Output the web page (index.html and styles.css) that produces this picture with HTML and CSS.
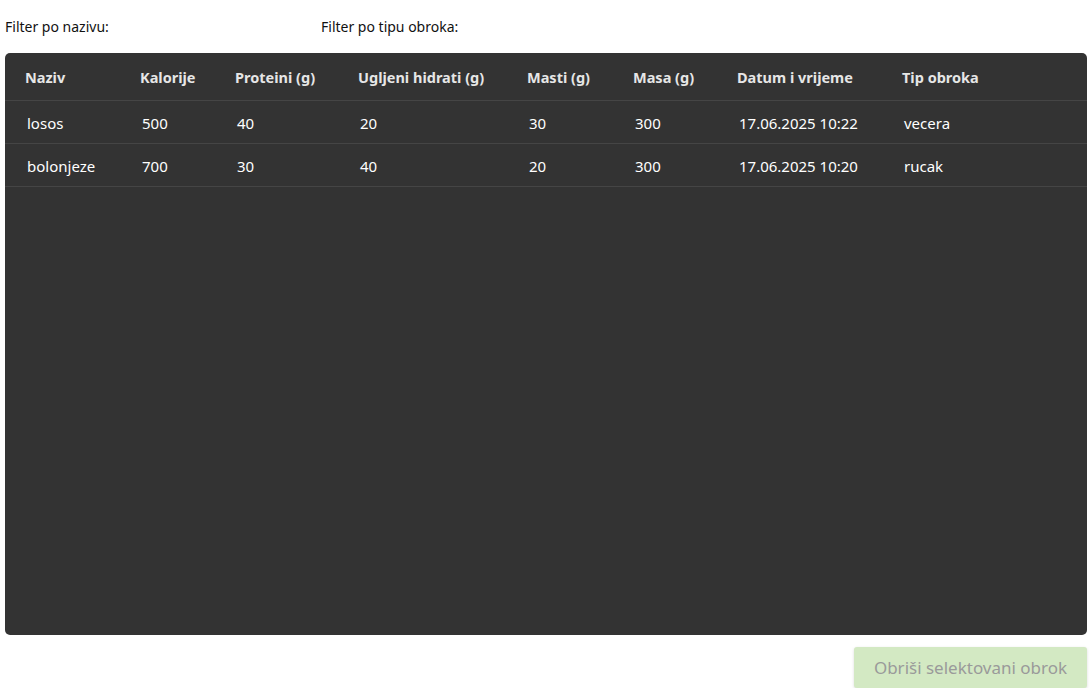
FILE: index.html
```html
<!DOCTYPE html>
<html>
<head>
<meta charset="utf-8">
<link rel="stylesheet" href="styles.css">
</head>
<body>
<div class="page">
  <div class="filters">
    <label class="filter filter-name">Filter po nazivu:</label>
    <label class="filter filter-type">Filter po tipu obroka:</label>
  </div>
  <div class="table-box">
    <table class="meals">
      <colgroup>
        <col style="width:115px"><col style="width:95px"><col style="width:123px"><col style="width:169px"><col style="width:106px"><col style="width:104px"><col style="width:165px"><col>
      </colgroup>
      <thead>
        <tr><th>Naziv</th><th>Kalorije</th><th>Proteini (g)</th><th>Ugljeni hidrati (g)</th><th>Masti (g)</th><th>Masa (g)</th><th>Datum i vrijeme</th><th>Tip obroka</th></tr>
      </thead>
      <tbody>
        <tr><td>losos</td><td>500</td><td>40</td><td>20</td><td>30</td><td>300</td><td>17.06.2025 10:22</td><td>vecera</td></tr>
        <tr><td>bolonjeze</td><td>700</td><td>30</td><td>40</td><td>20</td><td>300</td><td>17.06.2025 10:20</td><td>rucak</td></tr>
      </tbody>
    </table>
  </div>
  <div class="actions">
    <button class="delete-btn" disabled>Obriši selektovani obrok</button>
  </div>
</div>
</body>
</html>
```

FILE: styles.css
```css
html, body {
  margin: 0;
  padding: 0;
  background: #ffffff;
}
body {
  font-family: "Noto Sans", "Open Sans", sans-serif;
}
.page {
  padding: 0 5px;
}
.filters {
  display: flex;
  height: 53px;
  align-items: center;
  font-size: 14px;
  color: #111;
}
.filter-name {
  width: 316px;
}
.table-box {
  height: 582px;
  background: #333333;
  border-radius: 5px;
  overflow: hidden;
}
.meals {
  width: 100%;
  border-collapse: collapse;
  table-layout: fixed;
  color: #ffffff;
}
.meals th {
  text-align: left;
  font-weight: 700;
  font-size: 14.5px;
  color: #e6e6e6;
  height: 47px;
  padding: 0 0 0 20px;
  border-bottom: 1px solid #454545;
}
.meals td {
  font-size: 15px;
  height: 40px;
  padding: 2px 0 0 22px;
  border-bottom: 1px solid #454545;
}
.actions {
  display: flex;
  justify-content: flex-end;
  padding-top: 12px;
}
.delete-btn {
  width: 233px;
  height: 41px;
  border: none;
  border-radius: 3px;
  background: #d3e9c3;
  color: #9a9a9a;
  font-family: "Noto Sans", "Open Sans", sans-serif;
  font-size: 17px;
  box-shadow: 0 1px 3px rgba(0,0,0,0.15);
}
```
